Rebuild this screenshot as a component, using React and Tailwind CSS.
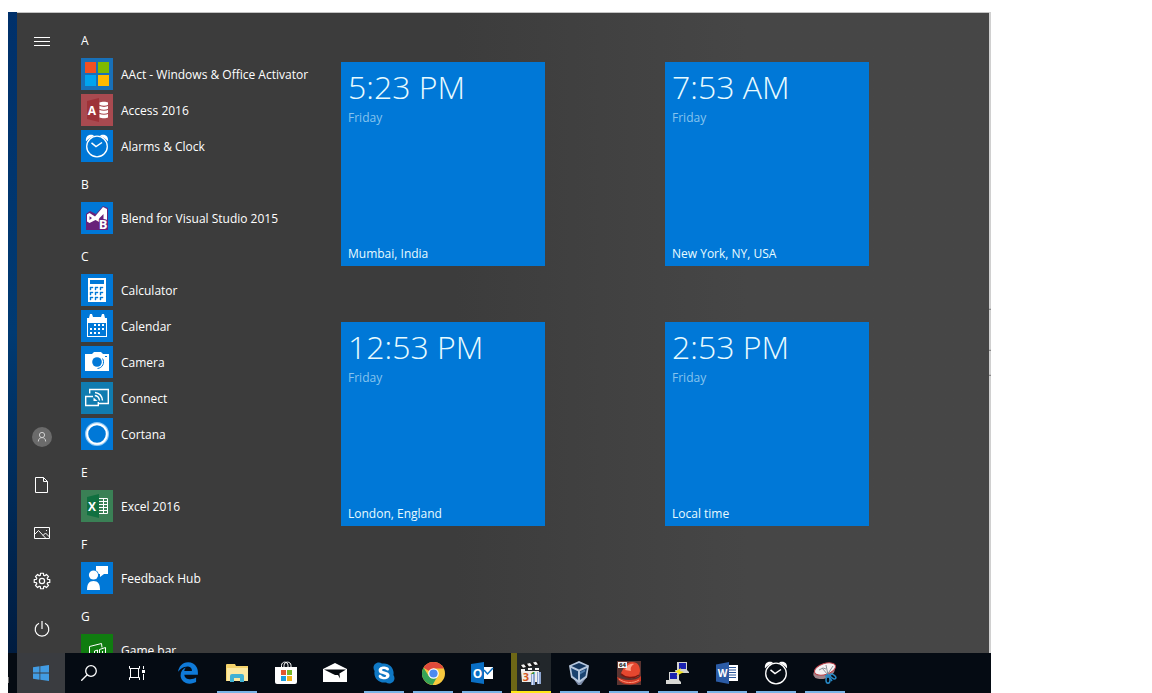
import React from "react";
import { FaEdgeLegacy, FaSkype } from "react-icons/fa6";

const gearPath = (() => {
  const points = [];
  for (let i = 0; i < 8; i++) {
    const base = (i * Math.PI) / 4;
    [[-0.29, 5.9], [-0.19, 7.9], [0.19, 7.9], [0.29, 5.9]].forEach(([a, r]) => {
      points.push(
        `${(8 + r * Math.sin(base + a)).toFixed(2)} ${(8 - r * Math.cos(base + a)).toFixed(2)}`
      );
    });
  }
  return `M${points.join("L")}Z`;
})();

function AlarmClock() {
  return (
    <svg viewBox="0 0 24 24" className="size-6" fill="none" stroke="#fff">
      <path d="M1 7.5C.4 3.500 2.500.8 6 .8c1.600 0 2.500.4 3 1.100C5.600 3 3 5 1 7.500ZM23 7.500C23.600 3.500 21.500.8 18 .8c-1.600 0-2.500.4-3 1.100C18.400 3 21 5 23 7.500Z" fill="#fff" stroke="none" />
      <circle cx="12" cy="12.500" r="10.300" strokeWidth="1.300" />
      <path d="M6.500 8.800 11 12.500l6-4" strokeWidth="1.500" />
    </svg>
  );
}

function OfficeIcon({ letter, dark, children }) {
  return (
    <svg viewBox="0 0 32 32" className="size-8">
      <path d="M6 7 18 4v24L6 25Z" fill={dark} />
      <text x="11" y="20.500" textAnchor="middle" fill="#fff" fontFamily="Open Sans, sans-serif" fontWeight="700" fontSize="12">
        {letter}
      </text>
      {children}
    </svg>
  );
}

const icons = {
  aact: (
    <svg viewBox="0 0 32 32" className="size-8">
      <path d="M4 4h11v11H4z" fill="#f25022" />
      <path d="M17 4h11v11H17z" fill="#7fba00" />
      <path d="M4 17h11v11H4z" fill="#00a4ef" />
      <path d="M17 17h11v11H17z" fill="#ffb900" />
    </svg>
  ),
  access: (
    <OfficeIcon letter="A" dark="#9e3238">
      <path d="M18.500 8.500c2-1 7-1 8.500 0v15c-1.500 1-6.500 1-8.500 0Z" fill="#fff" />
      <path d="M18 11.300c3 1.200 7 1.200 9.500 0M18 15.200c3 1.200 7 1.200 9.500 0M18 19.200c3 1.200 7 1.200 9.500 0" stroke="#a94a50" strokeWidth="1.200" fill="none" />
    </OfficeIcon>
  ),
  alarms: <AlarmClock />,
  blend: (
    <svg viewBox="0 0 32 32" className="size-8">
      <path d="M5 12 9 9l6 3 7-8 5 2v22H5Z" fill="#68217a" />
      <path fillRule="evenodd" d="M6 12.500 8.500 11l5.500 3.500L22 5l4 2v12h-3.500v-7L18 16.500l3 3-2 1-4.500-2.500L8.500 21 6 19.500Zm2.500 1.800v3.600l2.500-1.900Z" fill="#fff" />
      <text x="22" y="27" textAnchor="middle" fill="#fff" stroke="#68217a" strokeWidth="2" paintOrder="stroke" fontFamily="Open Sans, sans-serif" fontWeight="700" fontSize="13">B</text>
    </svg>
  ),
  calculator: (
    <svg viewBox="0 0 32 32" className="size-8">
      <path d="M7 4h18v24H7z" fill="#fff" />
      <path d="M9 6h14v4H9z" fill="#0078d7" />
      {[13, 18, 23].map((y) =>
        [9, 14, 19].map((x) => <path key={`${x}-${y}`} d={`M${x} ${y}h3v1h-2v2h-1z`} fill="#0078d7" stroke="#0078d7" strokeWidth=".4" />)
      )}
    </svg>
  ),
  calendar: (
    <svg viewBox="0 0 32 32" className="size-8">
      <path d="M6 8h2l1-4h2l1 3h8l1-3h2l1 4h2v19H6Z" fill="#fff" />
      <path d="M7 13h18v13H7z" fill="#0078d7" />
      {[[13, 14], [17, 14], [21, 14], [9, 18], [13, 18], [17, 18], [21, 18], [9, 22], [13, 22], [17, 22]].map(([x, y]) => (
        <path key={`${x}-${y}`} d={`M${x} ${y}h2v2h-2z`} fill="#fff" />
      ))}
    </svg>
  ),
  camera: (
    <svg viewBox="0 0 32 32" className="size-8">
      <path d="M4 8h7l2-2h7l2 2h6v17H4Z" fill="#fff" />
      <circle cx="16" cy="16" r="4.800" fill="#0078d7" />
      <path d="M21.500 12.500a6.500 6.500 0 0 1-5 10" stroke="#0078d7" fill="none" />
      <path d="M24 10h2v1h-2z" fill="#0078d7" />
    </svg>
  ),
  connect: (
    <svg viewBox="0 0 32 32" className="size-8" fill="none" stroke="#fff" strokeWidth="1.400">
      <path d="M8.700 11.500v-4h18.600v14H17.500" />
      <path d="M12 14.500H4.700v9h12.600v-3.500" />
      <path d="M14 10.500c4 .5 7 3.500 7.500 8M13.800 13.500c2.700.4 4.400 2.200 4.700 5" />
      <path d="m12.500 15.500 4 3.500h-4Z" fill="#fff" stroke="none" />
    </svg>
  ),
  cortana: (
    <svg viewBox="0 0 32 32" className="size-8" fill="none">
      <circle cx="16" cy="16" r="11" stroke="#8dc8f5" strokeWidth="2" />
      <circle cx="16" cy="16" r="9.800" stroke="#fff" strokeWidth="2" />
    </svg>
  ),
  excel: (
    <OfficeIcon letter="X" dark="#107040">
      <path d="M18 8.500h8.500v15H18M18 11.500h8.500M18 14.500h8.500M18 17.500h8.500M18 20.500h8.500M22.500 8v16" stroke="#fff" fill="none" />
    </OfficeIcon>
  ),
  feedback: (
    <svg viewBox="0 0 32 32" className="size-8" fill="#fff">
      <path d="M15 4h12v8h-4l-4 3v-3h-4Z" />
      <circle cx="12.500" cy="13" r="5.300" fill="#0078d7" />
      <circle cx="12.500" cy="13" r="4.600" />
      <path d="M6 28c0-6 2-9 6.500-9s6.500 3 6.500 9Z" />
    </svg>
  ),
  gamebar: (
    <svg viewBox="0 0 32 32" className="size-8" fill="none" stroke="#fff">
      <path d="M8.500 26V12.500L20.500 9.500l.5 4" />
      <path d="M13.500 26v-9l3-1v10M18.500 26V15.500l6-2V26M21.500 26v-9" />
    </svg>
  ),
};

const groups = [
  { letter: "A", apps: [
    { name: "AAct - Windows & Office Activator", icon: "aact", bg: "bg-[#1870b8]" },
    { name: "Access 2016", icon: "access", bg: "bg-[#a94a50]" },
    { name: "Alarms & Clock", icon: "alarms", bg: "bg-[#0078d7]" },
  ] },
  { letter: "B", apps: [{ name: "Blend for Visual Studio 2015", icon: "blend", bg: "bg-[#0078d7]" }] },
  { letter: "C", apps: [
    { name: "Calculator", icon: "calculator", bg: "bg-[#0078d7]" },
    { name: "Calendar", icon: "calendar", bg: "bg-[#0078d7]" },
    { name: "Camera", icon: "camera", bg: "bg-[#0078d7]" },
    { name: "Connect", icon: "connect", bg: "bg-[#107cb0]" },
    { name: "Cortana", icon: "cortana", bg: "bg-[#0078d7]" },
  ] },
  { letter: "E", apps: [{ name: "Excel 2016", icon: "excel", bg: "bg-[#3a8055]" }] },
  { letter: "F", apps: [{ name: "Feedback Hub", icon: "feedback", bg: "bg-[#0078d7]" }] },
  { letter: "G", apps: [{ name: "Game bar", icon: "gamebar", bg: "bg-[#107c10]" }] },
];

const clocks = [
  { time: "5:23 PM", place: "Mumbai, India" },
  { time: "7:53 AM", place: "New York, NY, USA" },
  { time: "12:53 PM", place: "London, England" },
  { time: "2:53 PM", place: "Local time" },
];

const railItems = [
  { label: "Account", icon: (
    <svg viewBox="0 0 20 20" className="size-5" fill="none" stroke="#d0d0d0">
      <circle cx="10" cy="10" r="10" fill="#6b6b6b" stroke="none" />
      <circle cx="10" cy="8" r="2.600" />
      <path d="M6.300 14.500c.2-2.500 1.500-3.900 3.700-3.900s3.500 1.400 3.700 3.900" />
    </svg>
  ) },
  { label: "Documents", icon: (
    <svg viewBox="0 0 16 16" className="size-4" fill="none" stroke="#fff">
      <path d="M1.500.5h8l4 4v11h-12ZM9.500.5v4h4" />
    </svg>
  ) },
  { label: "Pictures", icon: (
    <svg viewBox="0 0 16 16" className="size-4" fill="none" stroke="#fff">
      <path d="M.5 2.500h15v11H.5ZM.5 9.500l4-4 7.500 8M9 10.500l2.500-2.500 4 4" />
      <path d="M12 5h1v1h-1z" fill="#fff" stroke="none" />
    </svg>
  ) },
  { label: "Settings", icon: (
    <svg viewBox="0 0 16 16" className="size-4 overflow-visible" fill="none" stroke="#fff" strokeWidth="1.200" strokeLinejoin="round">
      <path d={gearPath} />
      <circle cx="8" cy="8" r="2.600" />
    </svg>
  ) },
  { label: "Power", icon: (
    <svg viewBox="0 0 16 16" className="size-4" fill="none" stroke="#fff" strokeWidth="1.200">
      <path d="M5 2.200a6.800 6.800 0 1 0 6 0M8 0v8" />
    </svg>
  ) },
];

const taskItems = [
  { label: "Microsoft Edge", icon: <FaEdgeLegacy className="size-[22px] text-[#0f7ad8]" /> },
  { label: "File Explorer", running: true, icon: (
    <svg viewBox="0 0 22 20" className="h-5 w-[22px]">
      <path d="M0 2q0-1 1-1h8l1 2h12v15H0Z" fill="#f4d36b" />
      <path d="M1 5h21v13H1Z" fill="#fce9a2" />
      <path d="M4 19v-6q0-2 2-2h10q2 0 2 2v6h-4v-4H8v4Z" fill="#41b1d3" />
    </svg>
  ) },
  { label: "Microsoft Store", icon: (
    <svg viewBox="0 0 24 24" className="size-6">
      <path d="M7.500 7V4.500C7.500 0 14 0 14 4.500V7M10 7V4.500C10 0 17 0 17 4.500V7" fill="none" stroke="#fff" />
      <path d="M1 6h22v15q0 2-2 2H3q-2 0-2-2Z" fill="#fff" />
      <path d="M7 9h5v5H7z" fill="#e2572f" />
      <path d="M13 9h5v5h-5z" fill="#78b829" />
      <path d="M7 15h5v5H7z" fill="#1a9fe0" />
      <path d="M13 15h5v5h-5z" fill="#f2b21c" />
    </svg>
  ) },
  { label: "Mail", icon: (
    <svg viewBox="0 0 24 20" className="h-5 w-6">
      <path d="M0 6 12 0l12 6v13H0Z" fill="#fff" />
      <path d="M1 6.500 12 12h3l2 3.500-.5-5L23 6.500Z" fill="#05090f" />
    </svg>
  ) },
  { label: "Skype", running: true, icon: (
    <span className="grid size-6 place-items-center">
      <svg viewBox="0 0 24 24" className="col-start-1 row-start-1 size-4"><circle cx="12" cy="12" r="12" fill="#fff" /></svg>
      <FaSkype className="col-start-1 row-start-1 size-6 text-[#0f78c4]" />
    </span>
  ) },
  { label: "Google Chrome", running: true, icon: (
    <svg viewBox="0 0 24 24" className="size-[23px]">
      <circle cx="12" cy="12" r="12" fill="#f7c93e" />
      <path d="M12 12 1.600 6A12 12 0 0 1 22.800 6.800H12Z" fill="#df4a3b" />
      <path d="M1.600 6A12 12 0 0 0 11 24l5.300-9.300L12 12 7 14.500Z" fill="#35a456" />
      <circle cx="12" cy="12" r="5.500" fill="#fff" />
      <circle cx="12" cy="12" r="4.300" fill="#4a8af0" />
    </svg>
  ) },
  { label: "Outlook", running: true, icon: (
    <svg viewBox="0 0 24 24" className="size-6">
      <path d="M12 6h11v12H12Z" fill="#fff" />
      <path d="m14 9 3.500 4L23 7" fill="none" stroke="#0a6fc4" strokeWidth="1.500" />
      <path d="M1 3 14 1v22L1 21Z" fill="#0a6fc4" />
      <text x="7.500" y="16.500" textAnchor="middle" fill="#fff" fontFamily="Open Sans, sans-serif" fontWeight="700" fontSize="12">O</text>
    </svg>
  ) },
  { label: "Media Calendar", active: true, icon: (
    <svg viewBox="0 0 24 26" className="h-[26px] w-6">
      <path d="M1 5 20 1l1 4L2 9Z" fill="#161616" />
      <path d="m2 5 3-.7L7 7l-3 .7ZM8 3.700l3-.6L13 5.700l-3 .7ZM14 2.400l3-.6L19 4.400l-3 .7ZM2 9h4v2H2zM9 8h4v2H9zM16 8h4v2h-4z" fill="#f4f4f4" />
      <path d="M2 11h18v11H3Z" fill="#f0eee8" />
      <text x="7" y="21" textAnchor="middle" fill="#d2571e" fontFamily="Open Sans, sans-serif" fontWeight="700" fontSize="11">3</text>
      <text x="14" y="20" textAnchor="middle" fill="#348b36" fontFamily="Open Sans, sans-serif" fontWeight="700" fontSize="10">1</text>
      <path d="M12 14h4v11h-4zM18 12h4v12h-4z" fill="#8da5cf" />
      <path d="M13 14h1v11h-1zM19 12h1v12h-1z" fill="#dce6fa" />
    </svg>
  ) },
  { label: "VirtualBox", running: true, icon: (
    <svg viewBox="0 0 24 26" className="h-[26px] w-6">
      <path d="m5 18 5 7h3l5-7Z" fill="#7d8ca8" />
      <path d="m11 1 10 4.500-2 12-8 5.500-8-5.500-2-12Z" fill="#b7c8de" />
      <path d="m11 3 7.500 3L11 9.500 3.500 6Z" fill="#14365e" />
      <path d="m3 8 7 3.300V20l-5.500-4ZM19 8l-7 3.300V20l5.500-4Z" fill="#1a4370" />
      <path d="m12 12 5-2.500v2l-5 3Z" fill="#4f7cab" />
    </svg>
  ) },
  { label: "Red Hat", running: true, icon: (
    <svg viewBox="0 0 24 24" className="size-6">
      <path d="M0 0h24v24H0z" fill="#5a3431" />
      <path d="M0 16c2 8 16 10 24 4v-5c-3 3-7 4-12 4-5 0-9-2-12-3Z" fill="#d23a26" />
      <path d="M4 12C7 7 9 1 15 1c6 0 8 4 8 9l-1 5c-6 4-15 2-18-3Z" fill="#e5472f" />
      <path d="M8 9c2-5 5-7 9-6-3 2-4 4-3 7Z" fill="#ffa28a" />
      <path d="M4 13c4 4 13 5 18 1" fill="none" stroke="#7d160f" strokeWidth="1.500" />
      <path d="M2 18c5 4 14 5 20 1" fill="none" stroke="#ff9276" />
      <path d="M1 1h9v6H1z" fill="#f4f4f4" />
      <text x="5.500" y="6" textAnchor="middle" fill="#111" fontFamily="Open Sans, sans-serif" fontWeight="700" fontSize="6">64</text>
    </svg>
  ) },
  { label: "PuTTY", running: true, icon: (
    <svg viewBox="0 0 24 24" className="size-6">
      <path d="M11 1h10v8H11zM9 9h12l2 2v1H10z" fill="#d2d2cf" />
      <path d="M13 2h7v6h-7z" fill="#1b22b0" />
      <path d="M3 11h10v8H3zM0 19h13l2 2v2H0z" fill="#d8d8d5" />
      <path d="M4 12h7v6H4z" fill="#1b22b0" />
      <path d="m15 7-6 4 4 1-3 3 8-4-4-1Z" fill="#f5e51b" />
    </svg>
  ) },
  { label: "Word", running: true, icon: (
    <svg viewBox="0 0 24 24" className="size-6">
      <path d="M12 4h11v16H12Z" fill="#fff" />
      <path d="M14 6.500h7M14 9h7M14 11.500h7M14 14h7M14 16.500h7" stroke="#2b579a" />
      <path d="M1 3.500 14 1v22L1 20.500Z" fill="#2b5ba5" />
      <text x="7.500" y="16" textAnchor="middle" fill="#fff" fontFamily="Open Sans, sans-serif" fontWeight="700" fontSize="10">W</text>
    </svg>
  ) },
  { label: "Alarms & Clock", running: true, icon: <AlarmClock /> },
  { label: "Snipping Tool", running: true, icon: (
    <svg viewBox="0 0 24 24" className="size-6" fill="none">
      <ellipse cx="11" cy="11" rx="11" ry="6.500" transform="rotate(-18 11 11)" fill="#9f858a" />
      <ellipse cx="12" cy="8" rx="11" ry="5.500" transform="rotate(-18 12 8)" fill="#f5f1f2" stroke="#bd434b" />
      <path d="m13 4 2 10M20 5l-6 9M9 7l6 7M6 9l4-2 3 1" stroke="#8b9298" />
      <ellipse cx="20" cy="15.500" rx="1.700" ry="3.200" transform="rotate(-55 20 15.500)" stroke="#2788c4" strokeWidth="1.500" />
      <ellipse cx="15" cy="19" rx="2" ry="3.200" stroke="#2788c4" strokeWidth="1.500" />
      <path d="m14 13 5 7M12 15l5-1" stroke="#2788c4" strokeWidth="1.500" />
    </svg>
  ) },
];

function Rail() {
  return (
    <nav aria-label="Start" className="flex w-12 shrink-0 flex-col pt-1">
      <button aria-label="Expand menu" className="grid size-12 place-items-center pl-0.5">
        <svg viewBox="0 0 16 16" className="size-4" stroke="#fff"><path d="M0 4.500h16M0 8.500h16M0 12.500h16" /></svg>
      </button>
      <div className="mt-auto">
        {railItems.map((item) => (
          <button key={item.label} aria-label={item.label} className="grid size-12 place-items-center pl-0.5">
            {item.icon}
          </button>
        ))}
      </div>
    </nav>
  );
}

function AppList() {
  return (
    <div className="w-[276px] shrink-0 overflow-hidden pt-[7px] pl-4">
      {groups.map((group) => (
        <section key={group.letter}>
          <h2 className="flex h-9 items-center pt-1.5">{group.letter}</h2>
          {group.apps.map((app) => (
            <button key={app.name} className="flex h-9 w-full items-center gap-2 text-left">
              <span className={`grid size-8 place-items-center ${app.bg}`}>{icons[app.icon]}</span>
              <span className="pt-0.5">{app.name}</span>
            </button>
          ))}
        </section>
      ))}
    </div>
  );
}

function ClockTile({ time, place }) {
  return (
    <button className="flex h-[204px] flex-col items-start bg-[#0078d7] px-[7px] pt-0.5 pb-1 text-left text-[#e8fbff]">
      <span className="text-[32px] leading-[46px] font-light">{time}</span>
      <span className="text-[#86c4ee]">Friday</span>
      <span className="mt-auto">{place}</span>
    </button>
  );
}

function Taskbar() {
  return (
    <footer className="flex h-10 shrink-0 bg-[#050b13]">
      <svg viewBox="0 0 9 40" className="h-10 w-[9px]"><path d="M.5 24v6" stroke="#777" /></svg>
      <button aria-label="Start" className="grid w-12 place-items-center bg-[#3a3c40]">
        <svg viewBox="0 0 16 16" className="size-4" fill="#429ce3">
          <path d="M0 2.200 6.500 1.300v6.300H0ZM7.300 1.200 16 0v7.600H7.300ZM0 8.400h6.500v6.300L0 13.800ZM7.300 8.400H16V16l-8.700-1.200Z" />
        </svg>
      </button>
      <button aria-label="Search" className="grid w-12 place-items-center">
        <svg viewBox="0 0 16 16" className="size-4" fill="none" stroke="#fff" strokeWidth="1.300">
          <circle cx="10" cy="6" r="5.300" /><path d="M6.200 9.800.3 15.700" />
        </svg>
      </button>
      <button aria-label="Task View" className="grid w-12 place-items-center">
        <svg viewBox="0 0 16 16" className="size-4" fill="none" stroke="#fff">
          <path d="M.5 1v2.500h10V1M.5 15v-2.500h10V15M1.500 3.500v9M9.500 3.500v9M14.500 1v3M14.500 9v6" />
          <path d="M13 5h3v3h-3z" fill="#fff" stroke="none" />
        </svg>
      </button>
      <div className="flex gap-[9px] pl-[7px]">
        {taskItems.map((item) => (
          <button
            key={item.label}
            aria-label={item.label}
            className={`grid w-10 place-items-center border-b-2 pt-[2px] ${
              item.active
                ? "border-[#ffe81a] bg-linear-to-r from-[#6e6716] from-15% to-[#22272b] to-15%"
                : item.running
                  ? "border-[#7ab4e6]"
                  : "border-transparent"
            }`}
          >
            {item.icon}
          </button>
        ))}
      </div>
    </footer>
  );
}

export default function App() {
  return (
    <div className="flex h-screen flex-col overflow-hidden bg-white pt-3 pr-[14%] pl-2 font-['Open_Sans','Noto_Sans',sans-serif] text-xs text-white">
      <main className="flex min-h-0 flex-1">
        <div className="w-[9px] shrink-0 bg-linear-to-b from-[#00306a] via-[#003a72] to-[#001c40]" />
        <div className="flex min-w-0 flex-1 border-t border-t-[#c4c4c4] bg-linear-to-r from-[#3c3c3c] from-45% to-[#464646] to-75%">
          <Rail />
          <AppList />
          <div className="grid grid-cols-[204px_204px] content-start gap-x-30 gap-y-14 pt-[49px]">
            {clocks.map((clock) => (
              <ClockTile key={clock.place} {...clock} />
            ))}
          </div>
        </div>
        <svg className="h-full w-0.5 shrink-0 bg-[#d0d0d0]" fill="#777" aria-hidden="true">
          <rect y="46.3%" width="2" height="1" />
          <rect y="52.7%" width="2" height="1" />
          <rect y="56.6%" width="2" height="1" />
        </svg>
      </main>
      <Taskbar />
    </div>
  );
}
